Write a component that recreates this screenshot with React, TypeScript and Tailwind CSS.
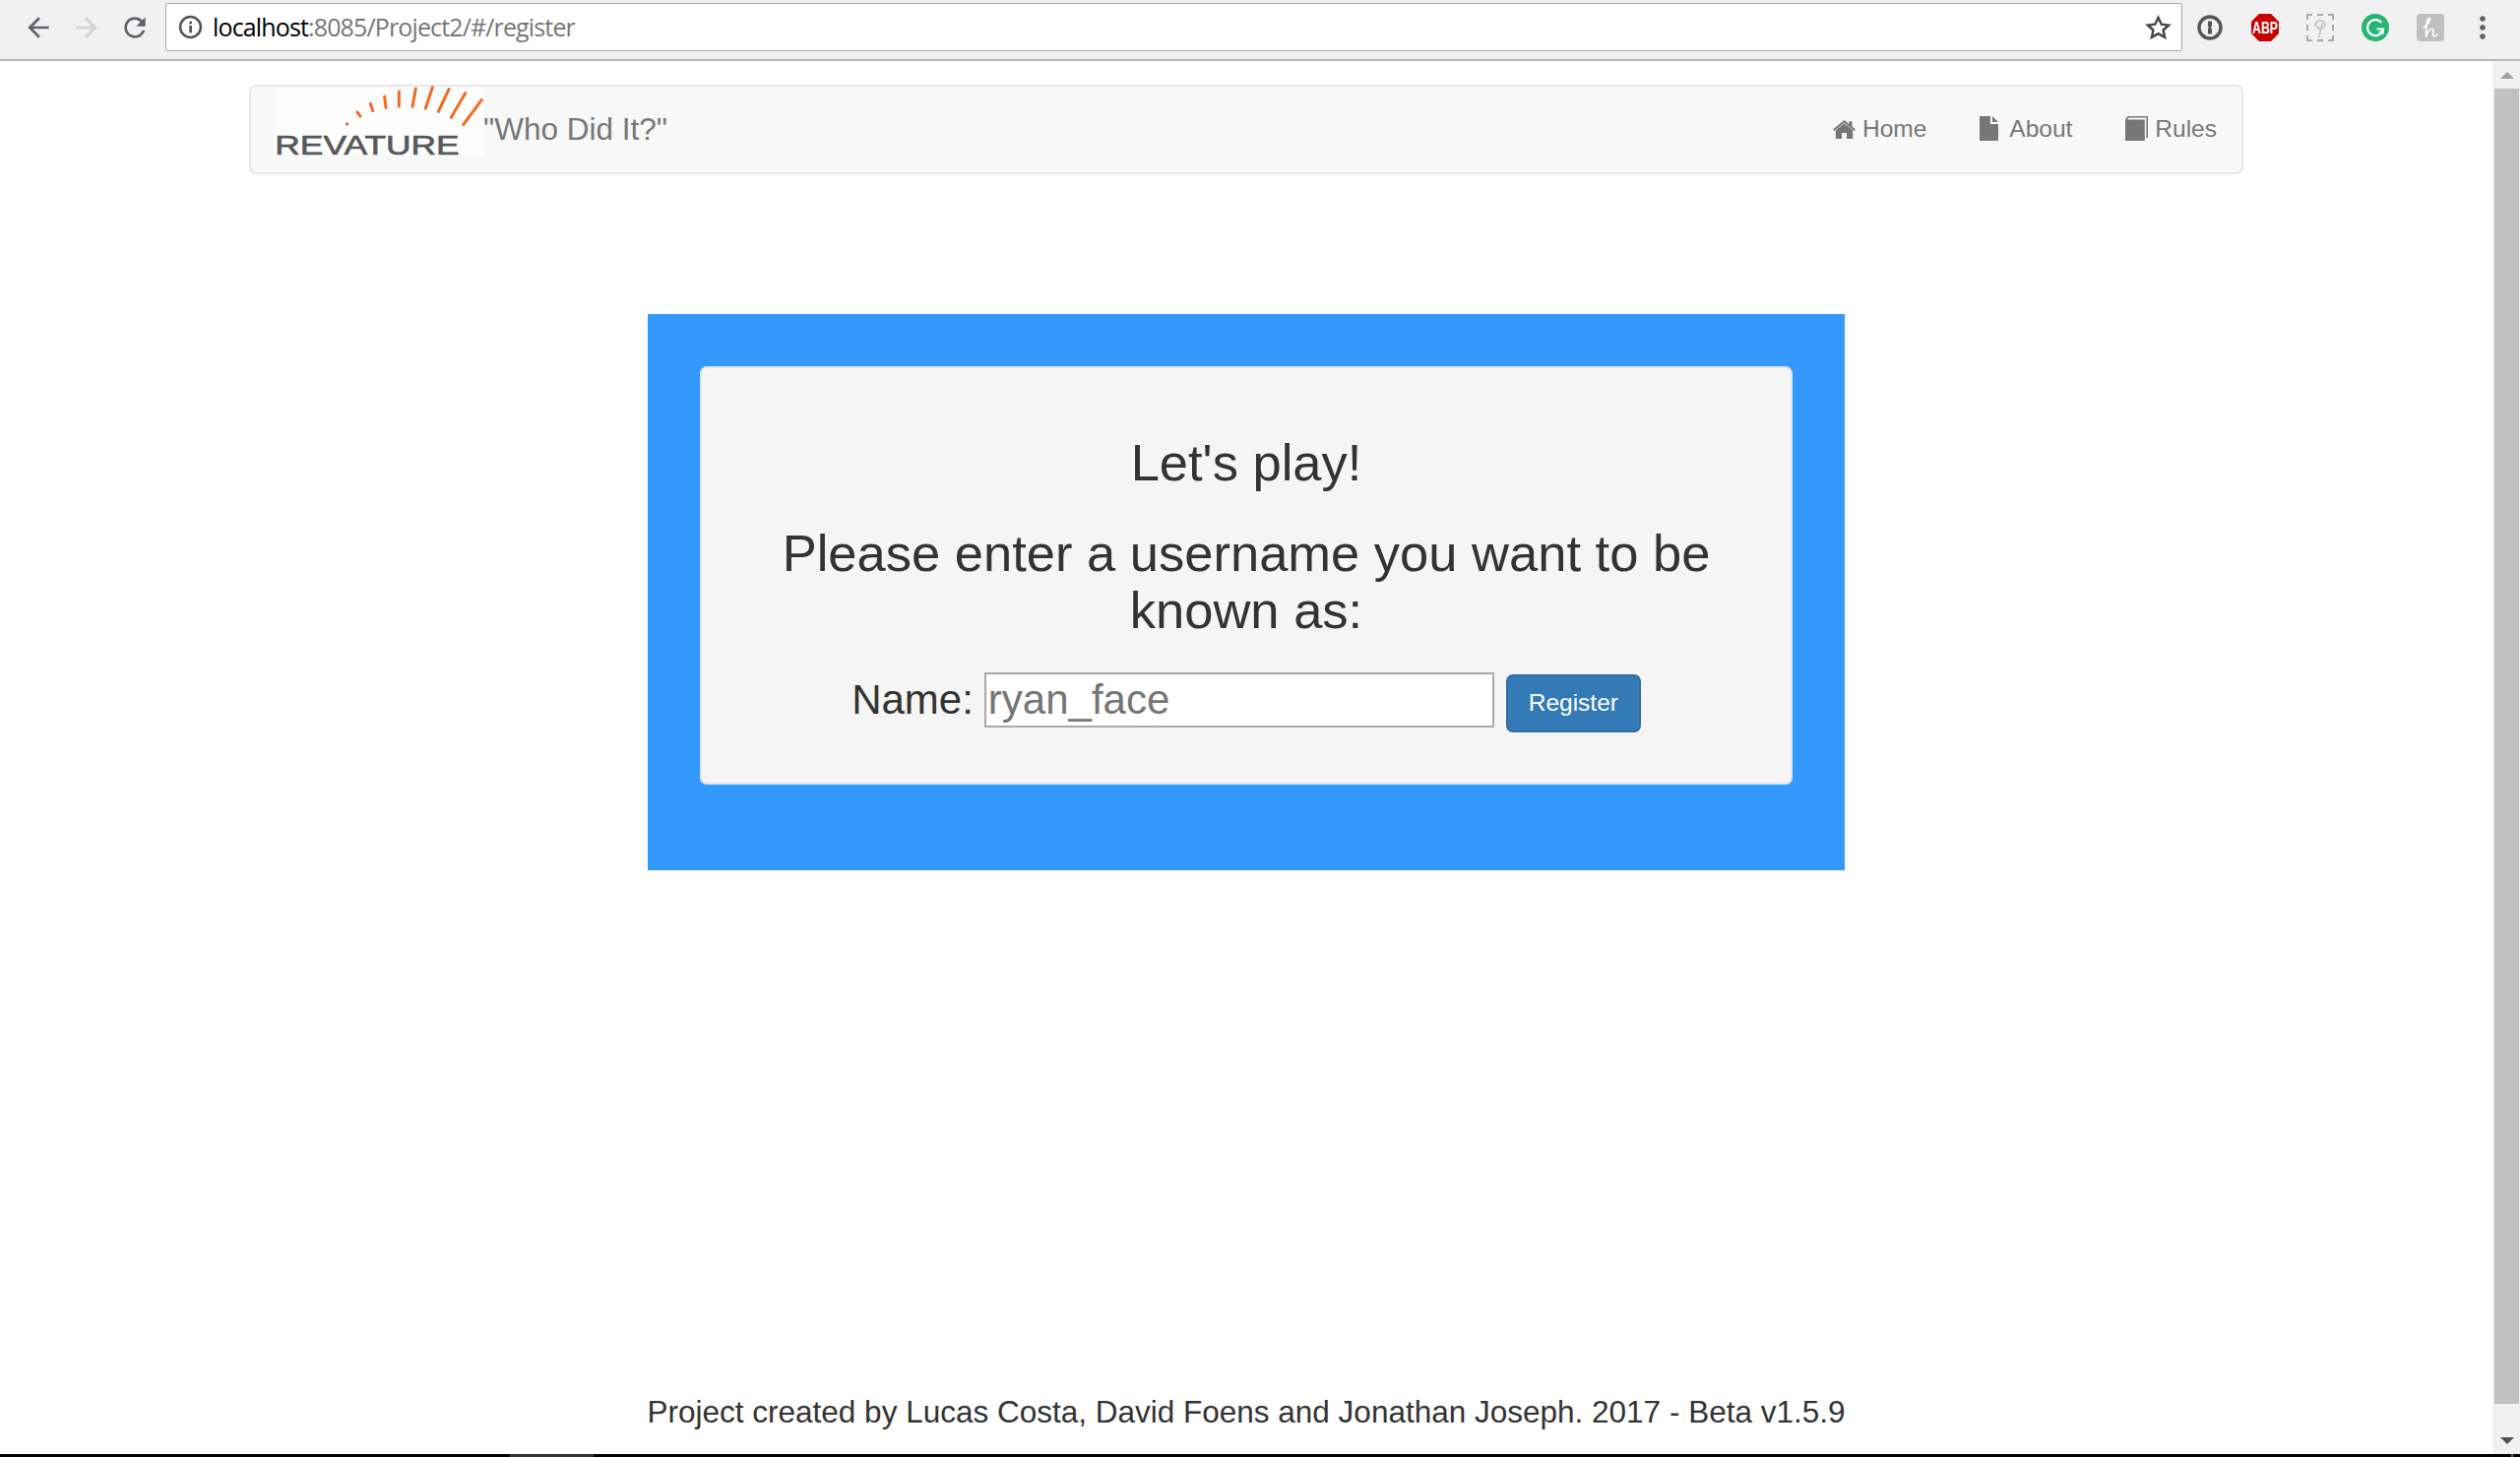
import React from "react";

const Ext = ({ children, className = "" }: { children: React.ReactNode; className?: string }) => (
  <div className={"w-[28px] h-[28px] flex items-center justify-center shrink-0 " + className}>{children}</div>
);

function Toolbar() {
  return (
    <div className="h-[62px] shrink-0 bg-[#f1f1f1] border-b-2 border-[#b8b8b8] flex items-start pt-[3px]">
      <svg className="w-[32px] h-[32px] ml-[23px] mt-[9px] shrink-0" viewBox="0 0 24 24" fill="#5f6368">
        <path d="M20 11H7.83l5.59-5.59L12 4l-8 8 8 8 1.41-1.41L7.83 13H20v-2z" />
      </svg>
      <svg className="w-[32px] h-[32px] ml-[17px] mt-[9px] shrink-0" viewBox="0 0 24 24" fill="#d2d2d2">
        <path d="M12 4l-1.41 1.41L16.17 11H4v2h12.17l-5.58 5.59L12 20l8-8z" />
      </svg>
      <svg className="w-[32px] h-[32px] ml-[17px] mt-[9px] shrink-0" viewBox="0 0 24 24" fill="#5f6368">
        <path d="M17.65 6.35C16.2 4.9 14.21 4 12 4c-4.42 0-7.99 3.58-7.99 8s3.57 8 7.99 8c3.73 0 6.84-2.55 7.73-6h-2.08c-.82 2.33-3.04 4-5.65 4-3.31 0-6-2.69-6-6s2.69-6 6-6c1.66 0 3.14.69 4.22 1.78L13 11h7V4l-2.35 2.35z" />
      </svg>
      <div className="ml-[15px] w-[2049px] h-[49px] shrink-0 bg-white border border-[#a8a8a8] rounded-[2px] flex items-center pl-[12px] pr-[10px]">
        <svg className="w-[25px] h-[25px] shrink-0" viewBox="0 0 24 24" fill="none">
          <circle cx="12" cy="12" r="10" stroke="#555" strokeWidth="2.4" />
          <rect x="10.8" y="10.6" width="2.6" height="7" fill="#555" />
          <rect x="10.8" y="6.4" width="2.6" height="2.6" fill="#555" />
        </svg>
        <span className="ml-[10px] text-[25px] text-[#777] font-['Open_Sans',sans-serif] tracking-[-0.86px] leading-none whitespace-nowrap">
          <span className="text-black">localhost</span>:8085/Project2/#/register
        </span>
        <svg className="ml-auto w-[27px] h-[26px] shrink-0" viewBox="0 0 24 24" fill="none">
          <path d="M12 2.6l2.9 6.3 6.9.8-5.1 4.6 1.4 6.8-6.1-3.4-6.1 3.4 1.4-6.8-5.1-4.6 6.9-.8z" stroke="#444" strokeWidth="2.2" strokeLinejoin="miter" />
        </svg>
      </div>
      <div className="ml-[14px] mt-[11px] flex items-center gap-[28px]">
        <Ext>
          <svg className="w-[26px] h-[26px]" viewBox="0 0 26 26" fill="none">
            <circle cx="13" cy="13" r="11" stroke="#555" strokeWidth="3.4" />
            <path d="M11 6.5h4v5l-1.2 1.5 1.2 1.5v5h-4v-5.5l1.2-1-1.2-1z" fill="#555" />
          </svg>
        </Ext>
        <Ext>
          <svg className="w-[28px] h-[28px] overflow-visible" viewBox="0 0 28 28">
            <polygon points="8,0 20,0 28,8 28,20 20,28 8,28 0,20 0,8" fill="#c70000" />
            <text x="14" y="20" textAnchor="middle" fontSize="17" fontWeight="700" fill="#fff" fontFamily="'Liberation Sans', sans-serif" textLength="26" lengthAdjust="spacingAndGlyphs">ABP</text>
          </svg>
        </Ext>
        <Ext className="border-2 border-dashed border-[#a9a9a9]">
          <svg className="w-[18px] h-[20px]" viewBox="0 0 18 20" fill="none">
            <path d="M8 19L11 6M4 8c0-4 4-6 7-5s4 5 1 7-6 1-6-1" stroke="#c8c8c8" strokeWidth="2" strokeLinecap="round" />
          </svg>
        </Ext>
        <Ext className="rounded-full bg-[#27b573]">
          <svg className="w-[22px] h-[22px]" viewBox="0 0 22 22" fill="none">
            <path d="M17.2 6A8 8 0 1 0 19 12.5h-6.5" stroke="#fff" strokeWidth="2.2" />
            <path d="M14 16l5-3.5 1 5.5z" fill="#fff" />
          </svg>
        </Ext>
        <Ext className="rounded-[4px] bg-[#bfbfbf]">
          <svg className="w-[20px] h-[24px]" viewBox="0 0 20 22" fill="none">
            <path d="M3 11C7 8 11 3 9 1.5S5.5 8 5.5 20.5c1-4 3-8 6-8 3 0 1 4 1 6s3 1.5 4.5-.5" stroke="#fff" strokeWidth="1.6" strokeLinecap="round" />
          </svg>
        </Ext>
        <svg className="w-[8px] h-[28px] ml-[7px] shrink-0" viewBox="0 0 8 28" fill="#5f6368">
          <circle cx="4" cy="5" r="2.8" />
          <circle cx="4" cy="14" r="2.8" />
          <circle cx="4" cy="23" r="2.8" />
        </svg>
      </div>
    </div>
  );
}

function Logo() {
  const rays = [
    [311, 102, 320, 114],
    [351, 76, 358, 98],
    [394, 54, 398, 88],
    [438, 38, 438, 84],
    [489, 30, 479, 85],
    [540, 26, 519, 90],
    [590, 32, 558, 100],
    [640, 44, 597, 118],
    [690, 64, 634, 140],
  ];
  return (
    <svg className="w-[211px] h-[70px] shrink-0 bg-[#fdfdfd] overflow-visible" viewBox="62 24 633 210">
      <circle cx="280" cy="138" r="5" fill="#f26b21" />
      {rays.map((r, i) => (
        <line key={i} x1={r[0]} y1={r[1]} x2={r[2]} y2={r[3]} stroke="#f26b21" strokeWidth="9" strokeLinecap="round" />
      ))}
      <text x="60" y="231" fontSize="85" fill="#58585a" stroke="#58585a" strokeWidth="2" fontFamily="'Liberation Sans', sans-serif" textLength="562" lengthAdjust="spacingAndGlyphs">REVATURE</text>
    </svg>
  );
}

function Navbar() {
  return (
    <div className="mt-[24px] ml-[253px] w-[2026px] h-[91px] shrink-0 bg-[#f8f8f8] border-2 border-[#e7e7e7] rounded-[7px] flex items-center pl-[25px] pr-[25px] text-[#777]">
      <div className="self-start"><Logo /></div>
      <span className="ml-[0px] text-[31.5px]">"Who Did It?"</span>
      <div className="ml-auto flex items-center text-[24.5px]">
        <svg className="w-[23px] h-[19px] mr-[7px] shrink-0" viewBox="0 0 23 19" fill="#777">
          <path d="M11.5 3.2L2.8 10.3V18c0 .6.4 1 1 1H9v-6h5v6h5.2c.6 0 1-.4 1-1v-7.7z" />
          <path d="M11.5 0L0 9.5l1.3 1.5L11.5 2.6 21.7 11l1.3-1.5L19.5 6.6V1.2h-3v2.9z" />
        </svg>
        <span>Home</span>
        <svg className="w-[19px] h-[25px] ml-[54px] mr-[11px] -mt-[3px] shrink-0" viewBox="0 0 19 25" fill="#777">
          <path d="M0 0h11v8h8v17H0z" />
          <path d="M13 0l6 6h-6z" />
        </svg>
        <span>About</span>
        <svg className="w-[23px] h-[25px] ml-[54px] mr-[7px] -mt-[3px] shrink-0" viewBox="0 0 23 25" fill="#777">
          <path d="M0 4.5C0 2 2 0 4.5 0H23v22h-1.6V1.6H5C3.4 1.6 2.6 2.4 2.2 3.4L19.8 3.4V25H0z" />
        </svg>
        <span>Rules</span>
      </div>
    </div>
  );
}

function Panel() {
  return (
    <div className="mt-[142px] ml-[658px] w-[1216px] shrink-0 bg-[#3399ff] pt-[53px] pb-[87px] px-[53px]">
      <div className="bg-[#f5f5f5] border-2 border-[#e3e3e3] rounded-[7px] pt-[67px] pb-[51px] text-center text-[#333]">
        <h3 className="text-[52.5px] leading-[58px]">Let's play!</h3>
        <h3 className="mt-[34px] mx-auto w-[1000px] text-[52.5px] leading-[57.75px]">Please enter a username you want to be known as:</h3>
        <div className="mt-[34px] flex justify-center items-start">
          <label className="text-[42px] leading-[56px] mr-[11px]">Name:</label>
          <input
            readOnly
            value="ryan_face"
            className="w-[518px] h-[56px] bg-white border-2 border-[#a9a9a9] pl-[2px] text-[42px] text-[#757575] outline-none"
          />
          <button className="ml-[12px] mt-[2px] w-[137px] h-[59px] bg-[#337ab7] border-2 border-[#2e6da4] rounded-[7px] text-[24.5px] text-white">
            Register
          </button>
        </div>
      </div>
    </div>
  );
}

export default function App() {
  return (
    <div className="w-[2560px] h-[1480px] overflow-hidden flex flex-col bg-white font-['Liberation_Sans',Arial,sans-serif]">
      <Toolbar />
      <div className="flex-1 min-h-0 flex">
        <div className="flex-1 flex flex-col min-w-0">
          <Navbar />
          <Panel />
          <div className="mt-auto pb-[20px] text-center text-[31.5px] leading-[45px] text-[#333]">
            Project created by Lucas Costa, David Foens and Jonathan Joseph. 2017 - Beta v1.5.9
          </div>
        </div>
        <div className="w-[28px] shrink-0 bg-[#f1f1f1] flex flex-col pl-[2px] pr-[1px]">
          <div className="h-[28px] shrink-0 flex items-center justify-center">
            <svg className="w-[14px] h-[7px]" viewBox="0 0 14 7" fill="#a3a3a3"><polygon points="7,0 14,7 0,7" /></svg>
          </div>
          <div className="flex-1 bg-[#c1c1c1]" />
          <div className="h-[51px] shrink-0 flex items-end justify-center pb-[10px]">
            <svg className="w-[14px] h-[7px]" viewBox="0 0 14 7" fill="#505050"><polygon points="0,0 14,0 7,7" /></svg>
          </div>
        </div>
      </div>
      <div className="h-[3px] shrink-0 bg-black flex">
        <div className="w-[518px]" />
        <div className="w-[85px] bg-[#333]" />
        <div className="flex-1" />
        <div className="w-[2px] mr-[7px] bg-[#666]" />
      </div>
    </div>
  );
}
